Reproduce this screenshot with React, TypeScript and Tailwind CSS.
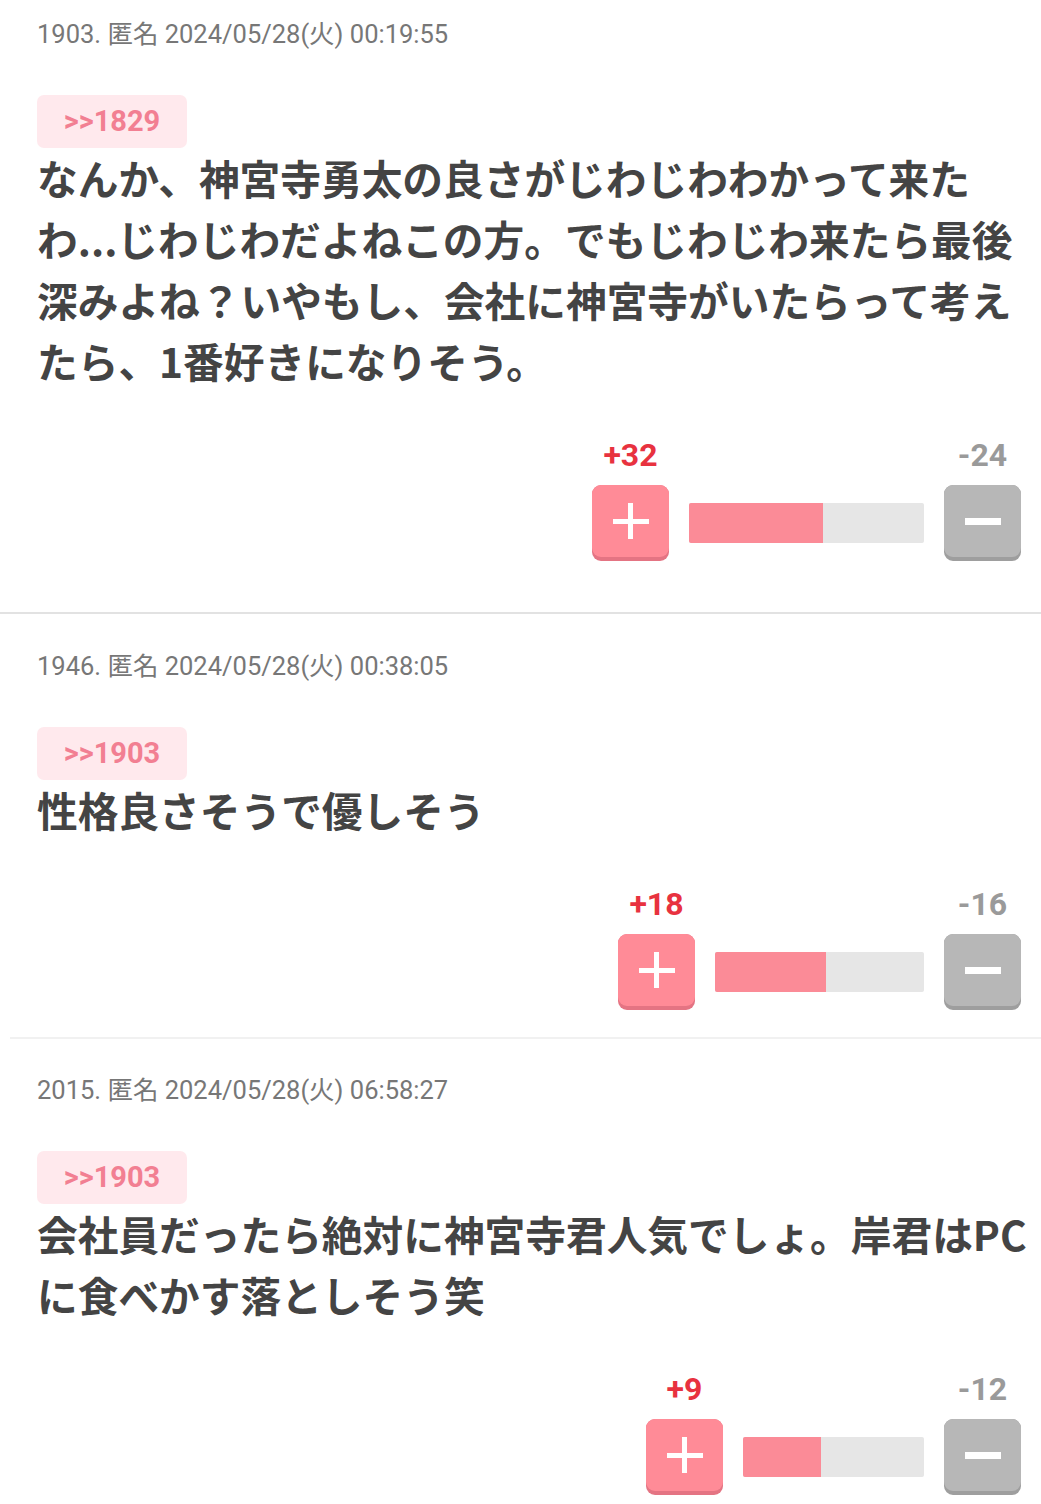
type Comment = {
  no: number;
  date: string;
  reply: string;
  body: string;
  plus: number;
  minus: number;
  barW: number;
};

const comments: Comment[] = [
  {
    no: 1903,
    date: "2024/05/28(火) 00:19:55",
    reply: ">>1829",
    body: "なんか、神宮寺勇太の良さがじわじわわかって来たわ...じわじわだよねこの方。でもじわじわ来たら最後深みよね？いやもし、会社に神宮寺がいたらって考えたら、1番好きになりそう。",
    plus: 32,
    minus: 24,
    barW: 235,
  },
  {
    no: 1946,
    date: "2024/05/28(火) 00:38:05",
    reply: ">>1903",
    body: "性格良さそうで優しそう",
    plus: 18,
    minus: 16,
    barW: 209,
  },
  {
    no: 2015,
    date: "2024/05/28(火) 06:58:27",
    reply: ">>1903",
    body: "会社員だったら絶対に神宮寺君人気でしょ。岸君はPCに食べかす落としそう笑",
    plus: 9,
    minus: 12,
    barW: 181,
  },
];

const Vote = ({ c }: { c: Comment }) => {
  const pct = (c.plus / (c.plus + c.minus)) * 100;
  return (
    <div className="flex justify-end pr-[20px] mt-[44px]">
      <div className="flex flex-col items-center w-[77px]">
        <span className="h-[40px] leading-[40px] text-[32px] font-bold text-[#e8323f]">+{c.plus}</span>
        <div className="mt-[10px] w-[77px] h-[76px] rounded-[9px] bg-[#e47483] pb-[4px]">
          <div className="w-full h-full rounded-[9px] bg-[#ff8b97] flex items-center justify-center">
            <div className="relative w-[36px] h-[36px]">
              <div className="absolute left-0 top-[15.5px] w-[36px] h-[5px] bg-white" />
              <div className="absolute top-0 left-[15.5px] w-[5px] h-[36px] bg-white" />
            </div>
          </div>
        </div>
      </div>
      <div className="flex items-center h-[76px] mt-[50px] mx-[20px]">
        <div className="h-[40px] bg-[#e6e6e6] flex rounded-[2px] overflow-hidden" style={{ width: c.barW }}>
          <div className="h-full bg-[#fb8b97]" style={{ width: `${pct}%` }} />
        </div>
      </div>
      <div className="flex flex-col items-center w-[77px]">
        <span className="h-[40px] leading-[40px] text-[32px] font-bold text-[#9a9a9a]">-{c.minus}</span>
        <div className="mt-[10px] w-[77px] h-[76px] rounded-[9px] bg-[#9e9e9e] pb-[4px]">
          <div className="w-full h-full rounded-[9px] bg-[#b7b7b7] flex items-center justify-center">
            <div className="w-[36px] h-[7px] bg-white" />
          </div>
        </div>
      </div>
    </div>
  );
};

export default function App() {
  return (
    <div className="w-[1041px] min-h-[1504px] bg-white" style={{ fontFamily: "Roboto, 'Noto Sans CJK JP', sans-serif" }}>
      {comments.map((c, i) => (
        <div key={c.no}>
          <div className={i === 0 ? "pt-[16px] pb-[51px]" : i === 1 ? "pt-[34px] pb-[27px]" : "pt-[33px] pb-[20px]"}>
            <div className="pl-[37px] h-[36px] leading-[36px] text-[25.5px] text-[#777777]">
              {c.no}. 匿名 {c.date}
            </div>
            <div className="pl-[37px] pr-[14px] mt-[43px]">
              <div className="w-[150px] h-[53px] rounded-[7px] bg-[#ffe9ed] flex items-center justify-center text-[29px] font-bold text-[#f27f92]">
                {c.reply}
              </div>
              <p
                className="-mt-[1px] text-[40.7px] leading-[61px] font-bold text-[#444444]"
                style={{ fontFamily: "'Noto Sans CJK JP', sans-serif" }}
              >
                {c.body}
              </p>
            </div>
            <Vote c={c} />
          </div>
          {i === 0 && <div className="h-[2px] bg-[#e2e2e2]" />}
          {i === 1 && <div className="ml-[10px] h-[2px] bg-[#f1f1f1]" />}
        </div>
      ))}
    </div>
  );
}
